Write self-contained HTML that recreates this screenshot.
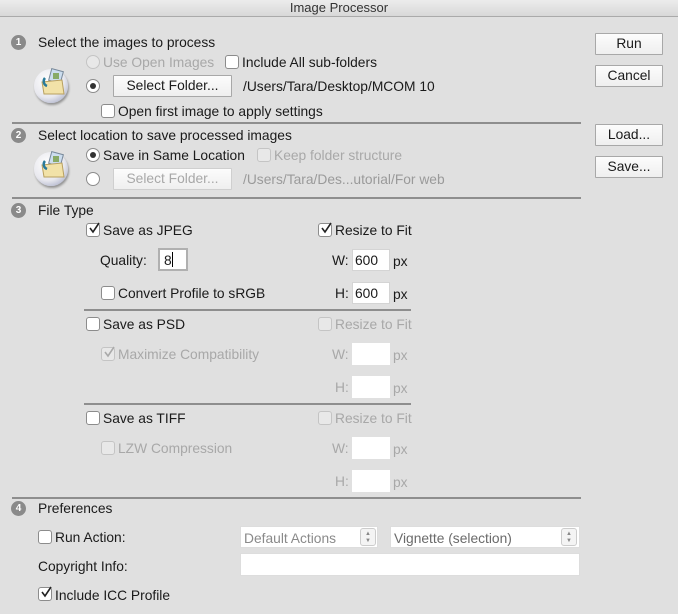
<!DOCTYPE html>
<html><head><style>
*{margin:0;padding:0;box-sizing:border-box}
body{width:678px;height:614px;background:#e0e0e0;font-family:"Liberation Sans",Arial,sans-serif;font-size:13.8px;color:#1a1a1a;position:relative;overflow:hidden}
.a{position:absolute;white-space:nowrap;line-height:16px}
.s{font-size:13.8px}
.d{color:#a8a8a8}
.cb{position:absolute;width:14px;height:14px;border:1px solid #8c8c8c;border-radius:3px;background:#fff}
.cb.dis{border-color:#c4c4c4;background:#e8e8e8}
.cb svg{position:absolute;left:1px;top:-2px}
.rd{position:absolute;width:14px;height:14px;border:1px solid #8c8c8c;border-radius:50%;background:#fff}
.rd.on::after{content:"";position:absolute;left:3px;top:3px;width:6px;height:6px;border-radius:50%;background:#333}
.rd.dis{border-color:#c4c4c4;background:#e8e8e8}
.btn{position:absolute;border:1px solid #a8a8a8;background:linear-gradient(#fcfcfc,#efefef);text-align:center;line-height:20px;border-radius:1px}
.sep{position:absolute;height:2px;background:#8e8e8e}
.num{position:absolute;width:15px;height:15px;border-radius:50%;background:#8a8a8a;color:#fff;font-size:10px;font-weight:bold;text-align:center;line-height:15px}
.in{position:absolute;background:#fff;border:1px solid #d4d4d4}
.icon{position:absolute;width:34px;height:34px;border-radius:50%;background:radial-gradient(circle at 40% 35%,#fff 0%,#e8e8ee 55%,#8e96b8 100%);box-shadow:1px 2px 2px rgba(0,0,0,.35)}
</style></head><body>
<div style="position:absolute;left:0;top:0;width:678px;height:17px;background:linear-gradient(#ececec,#d8d8d8);border-bottom:1px solid #aaa"></div>
<div class="a" style="left:0;width:678px;text-align:center;top:0;color:#333;font-size:13px">Image Processor</div>

<div class="btn" style="left:595px;top:33px;width:68px;height:22px">Run</div>
<div class="btn" style="left:595px;top:65px;width:68px;height:22px">Cancel</div>
<div class="btn" style="left:595px;top:124px;width:68px;height:22px">Load...</div>
<div class="btn" style="left:595px;top:156px;width:68px;height:22px">Save...</div>

<div class="num" style="left:11px;top:35px">1</div>
<div class="a" style="left:38px;top:35px">Select the images to process</div>
<div class="icon" style="left:34px;top:69px"></div>
<svg style="position:absolute;left:36px;top:66px" width="34" height="34"><rect x="14" y="4" width="12" height="12" fill="#cde" stroke="#789" transform="rotate(15 20 10)"/><rect x="17" y="7" width="6" height="6" fill="#8a6"/><path d="M6 16 L26 14 L28 28 L8 28Z" fill="#f2e2a8" stroke="#b8a060"/><path d="M9 12 a5 5 0 0 0 2 8" stroke="#2a7a9a" stroke-width="2.5" fill="none"/></svg>
<div class="rd dis" style="left:86px;top:55px"></div>
<div class="a d" style="left:103px;top:55px">Use Open Images</div>
<div class="cb" style="left:225px;top:55px"></div>
<div class="a" style="left:242px;top:55px">Include All sub-folders</div>
<div class="rd on" style="left:86px;top:79px"></div>
<div class="btn" style="left:113px;top:75px;width:119px;height:22px">Select Folder...</div>
<div class="a" style="left:243px;top:79px">/Users/Tara/Desktop/MCOM 10</div>
<div class="cb" style="left:101px;top:104px"></div>
<div class="a" style="left:118px;top:104px">Open first image to apply settings</div>
<div class="sep" style="left:12px;top:122px;width:569px"></div>

<div class="num" style="left:11px;top:128px">2</div>
<div class="a" style="left:38px;top:128px">Select location to save processed images</div>
<div class="icon" style="left:34px;top:152px"></div>
<svg style="position:absolute;left:36px;top:149px" width="34" height="34"><rect x="14" y="4" width="12" height="12" fill="#cde" stroke="#789" transform="rotate(15 20 10)"/><rect x="17" y="7" width="6" height="6" fill="#8a6"/><path d="M6 16 L26 14 L28 28 L8 28Z" fill="#f2e2a8" stroke="#b8a060"/><path d="M9 12 a5 5 0 0 0 2 8" stroke="#2a7a9a" stroke-width="2.5" fill="none"/></svg>
<div class="rd on" style="left:86px;top:148px"></div>
<div class="a" style="left:103px;top:148px">Save in Same Location</div>
<div class="cb dis" style="left:257px;top:148px"></div>
<div class="a d" style="left:274px;top:148px">Keep folder structure</div>
<div class="rd" style="left:86px;top:172px"></div>
<div class="btn d" style="left:113px;top:168px;width:119px;height:22px;border-color:#cfcfcf">Select Folder...</div>
<div class="a d" style="left:243px;top:172px;color:#9a9a9a">/Users/Tara/Des...utorial/For web</div>
<div class="sep" style="left:12px;top:197px;width:569px"></div>

<div class="num" style="left:11px;top:203px">3</div>
<div class="a" style="left:38px;top:203px">File Type</div>
<div class="cb" style="left:86px;top:223px"><svg width="13" height="13"><path d="M2 6 L5 10 L11 1" stroke="#222" stroke-width="1.6" fill="none"/></svg></div>
<div class="a" style="left:103px;top:223px">Save as JPEG</div>
<div class="cb" style="left:318px;top:223px"><svg width="13" height="13"><path d="M2 6 L5 10 L11 1" stroke="#222" stroke-width="1.6" fill="none"/></svg></div>
<div class="a" style="left:335px;top:223px">Resize to Fit</div>
<div class="a" style="left:100px;top:253px">Quality:</div>
<div class="in" style="left:158px;top:248px;width:30px;height:23px;border:2px solid #b0b0b0"></div>
<div class="a" style="left:164px;top:253px">8</div>
<div style="position:absolute;left:172px;top:252px;width:1px;height:15px;background:#000"></div>
<div class="a" style="left:332px;top:253px">W:</div>
<div class="in" style="left:352px;top:249px;width:38px;height:22px"></div>
<div class="a" style="left:355px;top:253px">600</div>
<div class="a" style="left:393px;top:254px">px</div>
<div class="cb" style="left:101px;top:286px"></div>
<div class="a" style="left:118px;top:286px">Convert Profile to sRGB</div>
<div class="a" style="left:335px;top:286px">H:</div>
<div class="in" style="left:352px;top:282px;width:38px;height:22px"></div>
<div class="a" style="left:355px;top:286px">600</div>
<div class="a" style="left:393px;top:287px">px</div>
<div class="sep" style="left:84px;top:309px;width:327px"></div>

<div class="cb" style="left:86px;top:317px"></div>
<div class="a" style="left:103px;top:317px">Save as PSD</div>
<div class="cb dis" style="left:318px;top:317px"></div>
<div class="a d" style="left:335px;top:317px">Resize to Fit</div>
<div class="cb dis" style="left:101px;top:347px"><svg width="13" height="13"><path d="M2 6 L5 10 L11 1" stroke="#aaa" stroke-width="1.6" fill="none"/></svg></div>
<div class="a d" style="left:118px;top:347px">Maximize Compatibility</div>
<div class="a d" style="left:332px;top:347px">W:</div>
<div class="in" style="left:352px;top:343px;width:38px;height:22px;border:none"></div>
<div class="a d" style="left:393px;top:348px">px</div>
<div class="a d" style="left:335px;top:380px">H:</div>
<div class="in" style="left:352px;top:376px;width:38px;height:22px;border:none"></div>
<div class="a d" style="left:393px;top:381px">px</div>
<div class="sep" style="left:84px;top:403px;width:327px"></div>

<div class="cb" style="left:86px;top:411px"></div>
<div class="a" style="left:103px;top:411px">Save as TIFF</div>
<div class="cb dis" style="left:318px;top:411px"></div>
<div class="a d" style="left:335px;top:411px">Resize to Fit</div>
<div class="cb dis" style="left:101px;top:441px"></div>
<div class="a d" style="left:118px;top:441px">LZW Compression</div>
<div class="a d" style="left:332px;top:441px">W:</div>
<div class="in" style="left:352px;top:437px;width:38px;height:22px;border:none"></div>
<div class="a d" style="left:393px;top:442px">px</div>
<div class="a d" style="left:335px;top:474px">H:</div>
<div class="in" style="left:352px;top:470px;width:38px;height:22px;border:none"></div>
<div class="a d" style="left:393px;top:475px">px</div>
<div class="sep" style="left:12px;top:497px;width:569px"></div>

<div class="num" style="left:11px;top:501px">4</div>
<div class="a s" style="left:38px;top:501px">Preferences</div>
<div class="cb" style="left:38px;top:530px"></div>
<div class="a s" style="left:55px;top:530px">Run Action:</div>
<div class="in" style="left:240px;top:526px;width:138px;height:22px;border:1px solid #ddd"></div>
<div class="a s" style="left:244px;top:531px;color:#8a8a8a">Default Actions</div>
<div style="position:absolute;left:360px;top:528px;width:16px;height:18px;border:1px solid #ccc;border-radius:3px;background:#f4f4f4;font-size:6px;color:#888;text-align:center;line-height:7px;padding-top:2px">▲<br>▼</div>
<div class="in" style="left:390px;top:526px;width:190px;height:22px;border:1px solid #ddd"></div>
<div class="a s" style="left:394px;top:531px;color:#6a6a6a">Vignette (selection)</div>
<div style="position:absolute;left:561px;top:528px;width:16px;height:18px;border:1px solid #ccc;border-radius:3px;background:#f4f4f4;font-size:6px;color:#888;text-align:center;line-height:7px;padding-top:2px">▲<br>▼</div>
<div class="a s" style="left:38px;top:559px">Copyright Info:</div>
<div class="in" style="left:240px;top:553px;width:340px;height:23px;border:1px solid #ddd"></div>
<div class="cb" style="left:38px;top:587px"><svg width="13" height="13"><path d="M2 6 L5 10 L11 1" stroke="#222" stroke-width="1.6" fill="none"/></svg></div>
<div class="a s" style="left:55px;top:588px">Include ICC Profile</div>
</body></html>
